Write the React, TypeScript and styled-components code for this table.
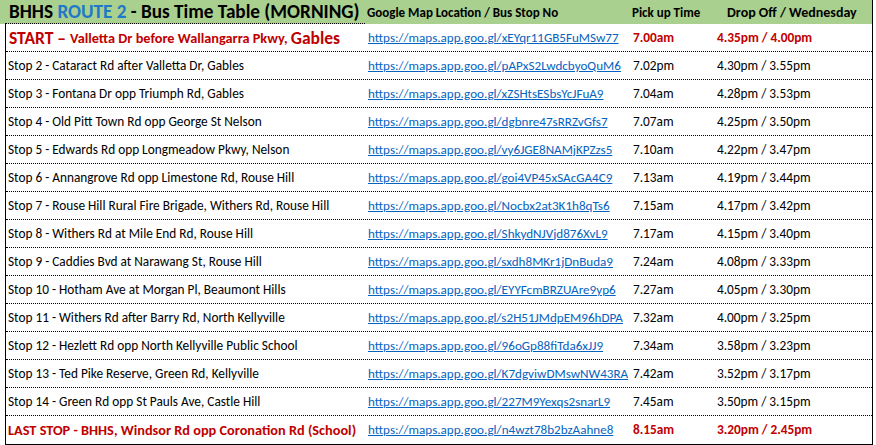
import React from "react";
import styled, { createGlobalStyle } from "styled-components";

const GlobalStyle = createGlobalStyle`
  *, *::before, *::after {
    box-sizing: border-box;
  }
  html, body {
    margin: 0;
    padding: 0;
    background: #ffffff;
  }
  body {
    font-family: Calibri, Carlito, Lato, "Open Sans", sans-serif;
    color: #000000;
  }
`;

type Stop = {
  name: string;
  link: string;
  pickup: string;
  dropoff: string;
};

const stops: Stop[] = [
  { name: "Stop 2 - Cataract Rd after Valletta Dr, Gables", link: "pAPxS2LwdcbyoQuM6", pickup: "7.02pm", dropoff: "4.30pm / 3.55pm" },
  { name: "Stop 3 - Fontana Dr opp Triumph Rd, Gables", link: "xZSHtsESbsYcJFuA9", pickup: "7.04am", dropoff: "4.28pm / 3.53pm" },
  { name: "Stop 4 - Old Pitt Town Rd opp George St Nelson", link: "dgbnre47sRRZvGfs7", pickup: "7.07am", dropoff: "4.25pm / 3.50pm" },
  { name: "Stop 5 - Edwards Rd opp Longmeadow Pkwy, Nelson", link: "vy6JGE8NAMjKPZzs5", pickup: "7.10am", dropoff: "4.22pm / 3.47pm" },
  { name: "Stop 6 - Annangrove Rd opp Limestone Rd, Rouse Hill", link: "goi4VP45xSAcGA4C9", pickup: "7.13am", dropoff: "4.19pm / 3.44pm" },
  { name: "Stop 7 - Rouse Hill Rural Fire Brigade, Withers Rd, Rouse Hill", link: "Nocbx2at3K1h8qTs6", pickup: "7.15am", dropoff: "4.17pm / 3.42pm" },
  { name: "Stop 8 - Withers Rd at Mile End Rd, Rouse Hill", link: "ShkydNJVjd876XvL9", pickup: "7.17am", dropoff: "4.15pm / 3.40pm" },
  { name: "Stop 9 - Caddies Bvd at Narawang St, Rouse Hill", link: "sxdh8MKr1jDnBuda9", pickup: "7.24am", dropoff: "4.08pm / 3.33pm" },
  { name: "Stop 10 - Hotham Ave at Morgan Pl, Beaumont Hills", link: "EYYFcmBRZUAre9yp6", pickup: "7.27am", dropoff: "4.05pm / 3.30pm" },
  { name: "Stop 11 - Withers Rd after Barry Rd, North Kellyville", link: "s2H51JMdpEM96hDPA", pickup: "7.32am", dropoff: "4.00pm / 3.25pm" },
  { name: "Stop 12 - Hezlett Rd opp North Kellyville Public School", link: "96oGp88fiTda6xJJ9", pickup: "7.34am", dropoff: "3.58pm / 3.23pm" },
  { name: "Stop 13 - Ted Pike Reserve, Green Rd, Kellyville", link: "K7dgviwDMswNW43RA", pickup: "7.42am", dropoff: "3.52pm / 3.17pm" },
  { name: "Stop 14 - Green Rd opp St Pauls Ave, Castle Hill", link: "227M9Yexqs2snarL9", pickup: "7.45am", dropoff: "3.50pm / 3.15pm" },
];

const COLS = "360px 263px 84px 1fr";
const RED = "#c00000";

const Page = styled.div`
  width: 873px;
  height: 445px;
  overflow: hidden;
`;

const HeaderRow = styled.div`
  display: grid;
  grid-template-columns: 5px ${COLS};
  height: 24px;
  background: #a9d08e;
  border-right: 1.5px solid #000;
`;

const TitleCell = styled.div`
  display: flex;
  align-items: center;
  padding-left: 4px;
  border-bottom: 1px dotted #000;
  font-size: 19.2px;
  font-weight: 700;
  white-space: nowrap;
`;

const Blue = styled.span`
  color: #1f78c8;
`;

const HeadCell = styled.div<{ $pad?: number; $size?: number }>`
  display: flex;
  align-items: center;
  padding-left: ${(p) => p.$pad ?? 2}px;
  padding-top: 1px;
  font-size: ${(p) => p.$size ?? 13}px;
  font-weight: 700;
  white-space: nowrap;
`;

const Body = styled.div`
  margin-left: 5px;
  border-left: 1.5px solid #000;
  border-right: 1.5px solid #000;
  border-bottom: 1.5px solid #000;
`;

const Row = styled.div`
  display: grid;
  grid-template-columns: ${COLS};
  height: 28px;
  border-bottom: 1px dotted #000;
  &:last-child {
    border-bottom: none;
    height: 27.5px;
  }
`;

const Cell = styled.div<{ $red?: boolean; $bold?: boolean; $pad?: number; $size?: number }>`
  display: flex;
  align-items: center;
  padding-left: ${(p) => p.$pad ?? 2}px;
  font-size: ${(p) => p.$size ?? 13.3}px;
  white-space: nowrap;
  overflow: hidden;
  color: ${(p) => (p.$red ? RED : "#000")};
  font-weight: ${(p) => (p.$bold ? 700 : 400)};
`;

const StartText = styled.span<{ $size: number }>`
  font-size: ${(p) => p.$size}px;
  font-weight: 700;
  color: ${RED};
  white-space: pre;
`;

const MapLink = styled.a`
  color: #0563c1;
  text-decoration: underline;
  font-size: 13.1px;
`;

const base = "https://maps.app.goo.gl/";

export default function App() {
  return (
    <Page>
      <GlobalStyle />
      <HeaderRow>
        <div />
        <TitleCell>
          BHHS&nbsp;<Blue>ROUTE 2</Blue>&nbsp;- Bus Time Table (MORNING)
        </TitleCell>
        <HeadCell>Google Map Location / Bus Stop No</HeadCell>
        <HeadCell $pad={4}>Pick up Time</HeadCell>
        <HeadCell $pad={15} $size={14}>Drop Off / Wednesday</HeadCell>
      </HeaderRow>
      <Body>
        <Row>
          <Cell $pad={3}>
            <StartText $size={17.5}>START – </StartText>
            <StartText $size={14.3}>Valletta Dr before Wallangarra Pkwy, </StartText>
            <StartText $size={17.5}>Gables</StartText>
          </Cell>
          <Cell>
            <MapLink href={base + "xEYqr11GB5FuMSw77"}>{base}xEYqr11GB5FuMSw77</MapLink>
          </Cell>
          <Cell $red $bold $pad={4}>7.00am</Cell>
          <Cell $red $bold $pad={4}>4.35pm / 4.00pm</Cell>
        </Row>
        {stops.map((s) => (
          <Row key={s.link}>
            <Cell>{s.name}</Cell>
            <Cell>
              <MapLink href={base + s.link}>{base + s.link}</MapLink>
            </Cell>
            <Cell $pad={4}>{s.pickup}</Cell>
            <Cell $pad={4}>{s.dropoff}</Cell>
          </Row>
        ))}
        <Row>
          <Cell $red $bold $size={14.3}>LAST STOP - BHHS, Windsor Rd opp Coronation Rd (School)</Cell>
          <Cell>
            <MapLink href={base + "n4wzt78b2bzAahne8"}>{base}n4wzt78b2bzAahne8</MapLink>
          </Cell>
          <Cell $red $bold $pad={4}>8.15am</Cell>
          <Cell $red $bold $pad={4}>3.20pm / 2.45pm</Cell>
        </Row>
      </Body>
    </Page>
  );
}
